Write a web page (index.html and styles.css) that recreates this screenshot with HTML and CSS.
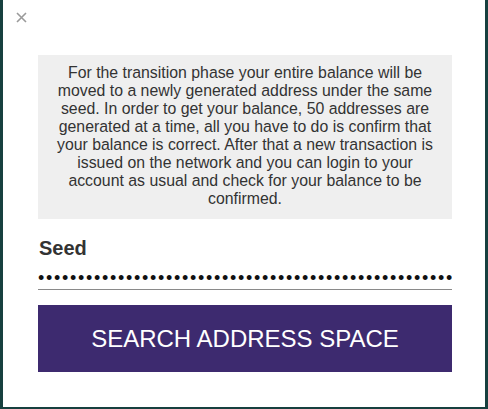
FILE: index.html
```html
<!DOCTYPE html>
<html>
<head>
<meta charset="utf-8">
<link rel="stylesheet" href="styles.css">
</head>
<body>
<div class="modal">
  <button class="close" aria-label="Close">
    <svg width="11" height="11" viewBox="0 0 11 11"><path d="M1 1L10 10M10 1L1 10" stroke="#9a9a9a" stroke-width="1.6" fill="none"/></svg>
  </button>
  <div class="content">
    <p class="info">For the transition phase your entire balance will be moved to a newly generated address under the same seed. In order to get your balance, 50 addresses are generated at a time, all you have to do is confirm that your balance is correct. After that a new transaction is issued on the network and you can login to your account as usual and check for your balance to be confirmed.</p>
    <label class="label" for="seed">Seed</label>
    <input class="seed" id="seed" type="password" readonly value="ABCDEFGHIJKLMNOPQRSTUVWXYZ9ABCDEFGHIJKLMNOPQRSTUVWXYZ9ABCDEFGHIJKLMNOPQRSTUVWXYZ9">
    <button class="action">SEARCH ADDRESS SPACE</button>
  </div>
</div>
</body>
</html>
```
FILE: styles.css
```css
html, body {
  margin: 0;
  padding: 0;
  background: #ffffff;
}
body {
  font-family: "Liberation Sans", Arial, sans-serif;
  width: 488px;
  height: 409px;
  overflow: hidden;
}
.modal {
  box-sizing: border-box;
  width: 488px;
  height: 409px;
  background: #ffffff;
  border-left: 3px solid #17403f;
  border-right: 3px solid #17403f;
  border-bottom: 2px solid #17403f;
  display: flex;
  flex-direction: column;
}
.close {
  align-self: flex-start;
  margin: 12px 0 0 13px;
  padding: 0;
  border: 0;
  background: transparent;
  width: 11px;
  height: 11px;
  display: flex;
}
.content {
  margin: 32px 33px 0 35px;
  display: flex;
  flex-direction: column;
}
.info {
  margin: 0;
  background: #efefef;
  color: #333333;
  font-size: 15.85px;
  line-height: 18px;
  text-align: center;
  padding: 9px 16px 11px;
}
.label {
  margin-top: 18px;
  font-size: 20px;
  font-weight: bold;
  color: #333333;
  line-height: 22px;
  padding-left: 1px;
}
.seed {
  margin-top: 8px;
  border: 0;
  border-bottom: 1px solid #8a8a8a;
  padding: 0;
  font-family: "Liberation Sans", Arial, sans-serif;
  font-size: 18px;
  letter-spacing: 1.7px;
  color: #111;
  outline: none;
  background: transparent;
  height: 22px;
  line-height: 22px;
}
.action {
  margin-top: 15px;
  height: 67px;
  border: 0;
  background: #3d2a6f;
  color: #ffffff;
  font-family: "Liberation Sans", Arial, sans-serif;
  font-size: 24px;
  padding: 0;
}
```
